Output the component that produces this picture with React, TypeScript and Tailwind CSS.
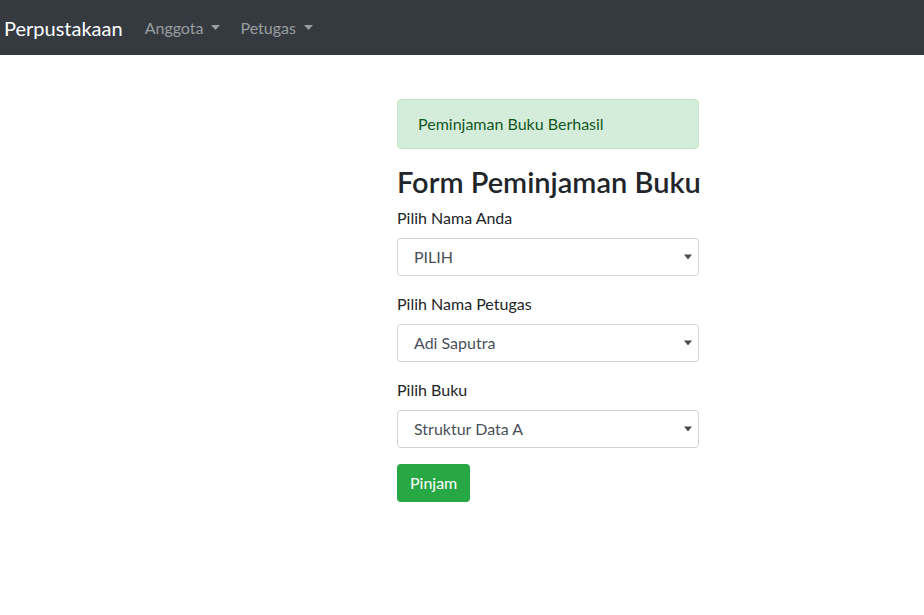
import React from "react"

function Caret() {
  return (
    <svg width="8" height="6" viewBox="0 0 8 6" className="shrink-0">
      <path d="M0 0.5h8L4 5.5z" fill="#4a4a4a" />
    </svg>
  )
}

function SelectBox({ value }: { value: string }) {
  return (
    <div className="flex h-[38px] items-center justify-between rounded border border-[#ced4da] bg-white pl-4 pr-[6px] text-[#495057]">
      <span>{value}</span>
      <Caret />
    </div>
  )
}

function Field({ label, value }: { label: string; value: string }) {
  return (
    <div className="mb-4">
      <div className="mb-2 h-6 leading-6 text-[#212529]">{label}</div>
      <SelectBox value={value} />
    </div>
  )
}

export default function App() {
  return (
    <div className="min-h-[615px] bg-white text-[16px] font-['Lato',sans-serif]">
      <nav className="flex h-[55px] items-center bg-[#343a40] pl-1">
        <span className="mr-[22px] text-[20px] text-white">Perpustakaan</span>
        <div className="flex items-center gap-[8px] text-[rgba(255,255,255,0.5)]">
          <span className="flex items-center gap-[8px] pr-[12px]">
            Anggota
            <svg width="9" height="5" viewBox="0 0 9 5"><path d="M0 0h9L4.5 5z" fill="currentColor" /></svg>
          </span>
          <span className="flex items-center gap-[8px]">
            Petugas
            <svg width="9" height="5" viewBox="0 0 9 5"><path d="M0 0h9L4.5 5z" fill="currentColor" /></svg>
          </span>
        </div>
      </nav>
      <div className="ml-[397px] mt-[44px] w-[302px]">
        <div className="mb-4 rounded border border-[#c3e6cb] bg-[#d4edda] px-5 py-3 leading-6 text-[#155724]">
          Peminjaman Buku Berhasil
        </div>
        <h3 className="mb-2 whitespace-nowrap text-[29px] font-semibold leading-[33px] text-[#212529]">Form Peminjaman Buku</h3>
        <Field label="Pilih Nama Anda" value="PILIH" />
        <Field label="Pilih Nama Petugas" value="Adi Saputra" />
        <Field label="Pilih Buku" value="Struktur Data A" />
        <button className="h-[38px] rounded bg-[#28a745] px-[13px] text-white">Pinjam</button>
      </div>
    </div>
  )
}
